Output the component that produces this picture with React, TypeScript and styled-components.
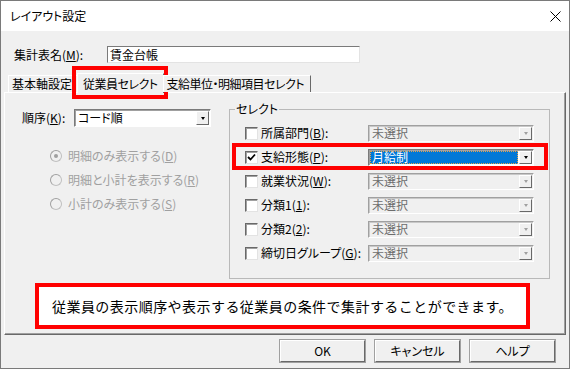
import React from "react";
import styled, { createGlobalStyle } from "styled-components";

const GlobalStyle = createGlobalStyle`
  html, body { margin: 0; padding: 0; background: #f0f0f0; }
  body {
    font-family: "Noto Sans CJK JP", "Noto Sans", sans-serif;
    font-size: 12px;
    color: #000;
  }
`;

const Window = styled.div`
  width: 570px;
  height: 369px;
  box-sizing: border-box;
  border: 1px solid #7a7a7a;
  background: #f0f0f0;
  display: flex;
  flex-direction: column;
  font-feature-settings: "palt" 1;
  line-height: 14px;
`;

const TitleBar = styled.div`
  height: 30px;
  flex: none;
  background: #fff;
  display: flex;
  align-items: center;
  justify-content: space-between;
  padding: 0 8px 0 9px;
`;

const Title = styled.span`
  font-size: 12px;
`;

const NameRow = styled.div`
  display: flex;
  align-items: center;
  margin-top: 15px;
  padding-left: 13px;
  height: 17px;
`;

const Label = styled.span<{ $w?: number; $dim?: boolean }>`
  width: ${(p) => (p.$w ? `${p.$w}px` : "auto")};
  flex: none;
  white-space: nowrap;
  color: ${(p) => (p.$dim ? "#a0a0a0" : "#000")};
`;

const TextBox = styled.div`
  width: 253px;
  height: 17px;
  box-sizing: border-box;
  background: #fff;
  border: 1px solid;
  border-color: #7a7a7a #e3e3e3 #e3e3e3 #7a7a7a;
  padding-left: 2px;
  display: flex;
  align-items: center;
`;

const TabStrip = styled.div`
  display: flex;
  align-items: flex-end;
  height: 19px;
  margin-top: 10px;
  padding-left: 7px;
  position: relative;
  z-index: 1;
`;

const Tab = styled.div<{ $active?: boolean; $tight?: boolean }>`
  position: relative;
  height: ${(p) => (p.$active ? 20 : 17)}px;
  margin: 0 ${(p) => (p.$active ? -1 : 0)}px ${(p) => (p.$active ? -1 : 0)}px
    ${(p) => (p.$active ? -2 : 0)}px;
  padding: 0 ${(p) => (p.$active ? 5 : 6)}px 0 ${(p) => (p.$active ? 5 : 3)}px;
  box-sizing: border-box;
  border: 1px solid;
  border-color: #fff #696969 transparent #fff;
  border-bottom: none;
  background: #f0f0f0;
  display: flex;
  align-items: center;
  white-space: nowrap;
  letter-spacing: ${(p) => (p.$tight ? "-0.5px" : "0")};

  ${(p) =>
    p.$active &&
    `
    &::after {
      content: "";
      position: absolute;
      left: -6px;
      right: -5px;
      top: -8px;
      bottom: -6px;
      border: 4px solid #f00;
    }
  `}
`;

const Panel = styled.div`
  width: 562px;
  height: 243px;
  margin-left: 3px;
  box-sizing: border-box;
  border: 1px solid;
  border-color: #fff #696969 #696969 #fff;
  box-shadow: inset -1px -1px #a0a0a0;
  padding-top: 9px;
  display: flex;
  flex-direction: column;
`;

const PanelTop = styled.div`
  display: grid;
  grid-template-columns: 224px 321px;
`;

const LeftCol = styled.div`
  display: flex;
  flex-direction: column;
`;

const OrderRow = styled.div`
  display: flex;
  align-items: center;
  margin-top: 7px;
  padding-left: 17px;
`;

const Combo = styled.div<{ $w: number; $disabled?: boolean; $h?: number }>`
  width: ${(p) => p.$w}px;
  height: ${(p) => p.$h ?? 17}px;
  box-sizing: border-box;
  flex: none;
  display: flex;
  align-items: stretch;
  background: ${(p) => (p.$disabled ? "#f0f0f0" : "#fff")};
  border: 1px solid;
  border-color: ${(p) =>
    p.$disabled ? "#a0a0a0 #fff #fff #a0a0a0" : "#7a7a7a #fff #fff #7a7a7a"};
  box-shadow: inset 1px 1px ${(p) => (p.$disabled ? "#c8c8c8" : "#a0a0a0")};
  color: ${(p) => (p.$disabled ? "#6d6d6d" : "#000")};
`;

const ComboText = styled.div<{ $selected?: boolean }>`
  flex: 1;
  display: flex;
  align-items: center;
  padding-left: 2px;
  margin: 1px;
  ${(p) =>
    p.$selected &&
    `
    background: #0078d7;
    color: #fff;
    outline: 1px dotted #e8a24a;
    outline-offset: -1px;
  `}
`;

const DropButton = styled.div<{ $disabled?: boolean }>`
  width: 13px;
  flex: none;
  margin: 1px 1px 1px 0;
  box-sizing: border-box;
  background: #f0f0f0;
  border: 1px solid;
  border-color: #fff #696969 #696969 #fff;
  display: flex;
  align-items: center;
  justify-content: center;

  &::before {
    content: "";
    border-left: 2.5px solid transparent;
    border-right: 2.5px solid transparent;
    border-top: 3px solid ${(p) => (p.$disabled ? "#a0a0a0" : "#000")};
  }
`;

const RadioList = styled.div`
  display: flex;
  flex-direction: column;
  margin-top: 17px;
  padding-left: 45px;
`;

const RadioRow = styled.div`
  display: flex;
  align-items: center;
  height: 24px;
  gap: 6px;
`;

const Radio = styled.span<{ $checked?: boolean }>`
  width: 12px;
  height: 12px;
  box-sizing: border-box;
  border-radius: 50%;
  border: 1px solid #c0c0c0;
  border-top-color: #a0a0a0;
  border-left-color: #a0a0a0;
  background: #f0f0f0;
  display: flex;
  align-items: center;
  justify-content: center;

  &::after {
    content: "";
    width: 4px;
    height: 4px;
    border-radius: 50%;
    background: ${(p) => (p.$checked ? "#a0a0a0" : "transparent")};
  }
`;

const Group = styled.fieldset`
  margin: 0;
  height: 177px;
  box-sizing: border-box;
  padding: 0 1px 0 2px;
  border: 1px solid #b9b9b9;
  min-width: 0;
`;

const Legend = styled.legend`
  margin-left: 3px;
  padding: 0 1px;
  line-height: 14px;
`;

const Rows = styled.div`
  display: flex;
  flex-direction: column;
  margin-top: 5px;
`;

const CheckRow = styled.div<{ $marked?: boolean }>`
  position: relative;
  display: flex;
  align-items: center;
  height: 24px;
  padding-left: 13px;

  ${(p) =>
    p.$marked &&
    `
    &::after {
      content: "";
      position: absolute;
      left: 0;
      right: 0;
      top: -2px;
      bottom: -1px;
      border: 4px solid #f00;
      pointer-events: none;
    }
  `}
`;

const CheckBox = styled.span`
  width: 13px;
  height: 13px;
  box-sizing: border-box;
  flex: none;
  background: #fff;
  border: 1px solid;
  border-color: #696969 #e3e3e3 #e3e3e3 #696969;
  box-shadow: inset 1px 1px #a0a0a0;
  margin-right: 3px;
  display: flex;
  align-items: center;
  justify-content: center;
`;

const MessageBox = styled.div`
  margin: 4px 0 0 30px;
  width: 495px;
  height: 46px;
  box-sizing: border-box;
  border: 4px solid #f00;
  background: #fff;
  display: flex;
  align-items: center;
  justify-content: center;
  font-size: 14px;
  font-feature-settings: normal;
  letter-spacing: 0.45px;
`;

const ButtonRow = styled.div`
  display: flex;
  justify-content: flex-end;
  gap: 10px;
  margin-top: 5px;
  padding-right: 14px;
`;

const Button = styled.div`
  width: 85px;
  height: 22px;
  box-sizing: border-box;
  background: #f0f0f0;
  border: 1px solid;
  border-color: #fff #696969 #696969 #fff;
  box-shadow: 0 0 0 1px #a0a0a0;
  display: flex;
  align-items: center;
  justify-content: center;
`;

const CloseIcon = () => (
  <svg width="11" height="11" viewBox="0 0 11 11">
    <path d="M0.5 0.5 L10.5 10.5 M10.5 0.5 L0.5 10.5" stroke="#000" strokeWidth="1" />
  </svg>
);

const CheckMark = () => (
  <svg width="9" height="9" viewBox="0 0 9 9">
    <path d="M1 4 L3.5 6.5 L8 1.5" stroke="#000" strokeWidth="1.8" fill="none" />
  </svg>
);

const selects = [
  { label: "所属部門", key: "B", value: "未選択" },
  { label: "支給形態", key: "P", value: "月給制", on: true },
  { label: "就業状況", key: "W", value: "未選択" },
  { label: "分類1", key: "1", value: "未選択" },
  { label: "分類2", key: "2", value: "未選択" },
  { label: "締切日グループ", key: "G", value: "未選択" },
];

const radios = [
  { text: "明細のみ表示する", key: "D", checked: true },
  { text: "明細と小計を表示する", key: "R" },
  { text: "小計のみ表示する", key: "S" },
];

export default function App() {
  return (
    <>
      <GlobalStyle />
      <Window>
        <TitleBar>
          <Title>レイアウト設定</Title>
          <CloseIcon />
        </TitleBar>

        <NameRow>
          <Label $w={93}>
            集計表名(<u>M</u>):
          </Label>
          <TextBox>賃金台帳</TextBox>
        </NameRow>

        <TabStrip>
          <Tab>基本軸設定</Tab>
          <Tab $active $tight>
            従業員セレクト
          </Tab>
          <Tab $tight>支給単位・明細項目セレクト</Tab>
        </TabStrip>

        <Panel>
          <PanelTop>
            <LeftCol>
              <OrderRow>
                <Label $w={52}>
                  順序(<u>K</u>):
                </Label>
                <Combo $w={137} $h={18}>
                  <ComboText>コード順</ComboText>
                  <DropButton />
                </Combo>
              </OrderRow>
              <RadioList>
                {radios.map((r) => (
                  <RadioRow key={r.key}>
                    <Radio $checked={r.checked} />
                    <Label $dim>
                      {r.text}(<u>{r.key}</u>)
                    </Label>
                  </RadioRow>
                ))}
              </RadioList>
            </LeftCol>

            <Group>
              <Legend>セレクト</Legend>
              <Rows>
                {selects.map((s) => (
                  <CheckRow key={s.key} $marked={s.on}>
                    <CheckBox>{s.on && <CheckMark />}</CheckBox>
                    <Label $w={107}>
                      {s.label}(<u>{s.key}</u>):
                    </Label>
                    <Combo $w={166} $disabled={!s.on}>
                      <ComboText $selected={s.on}>{s.value}</ComboText>
                      <DropButton $disabled={!s.on} />
                    </Combo>
                  </CheckRow>
                ))}
              </Rows>
            </Group>
          </PanelTop>

          <MessageBox>
            従業員の表示順序や表示する従業員の条件で集計することができます。
          </MessageBox>
        </Panel>

        <ButtonRow>
          <Button>OK</Button>
          <Button>キャンセル</Button>
          <Button>ヘルプ</Button>
        </ButtonRow>
      </Window>
    </>
  );
}
